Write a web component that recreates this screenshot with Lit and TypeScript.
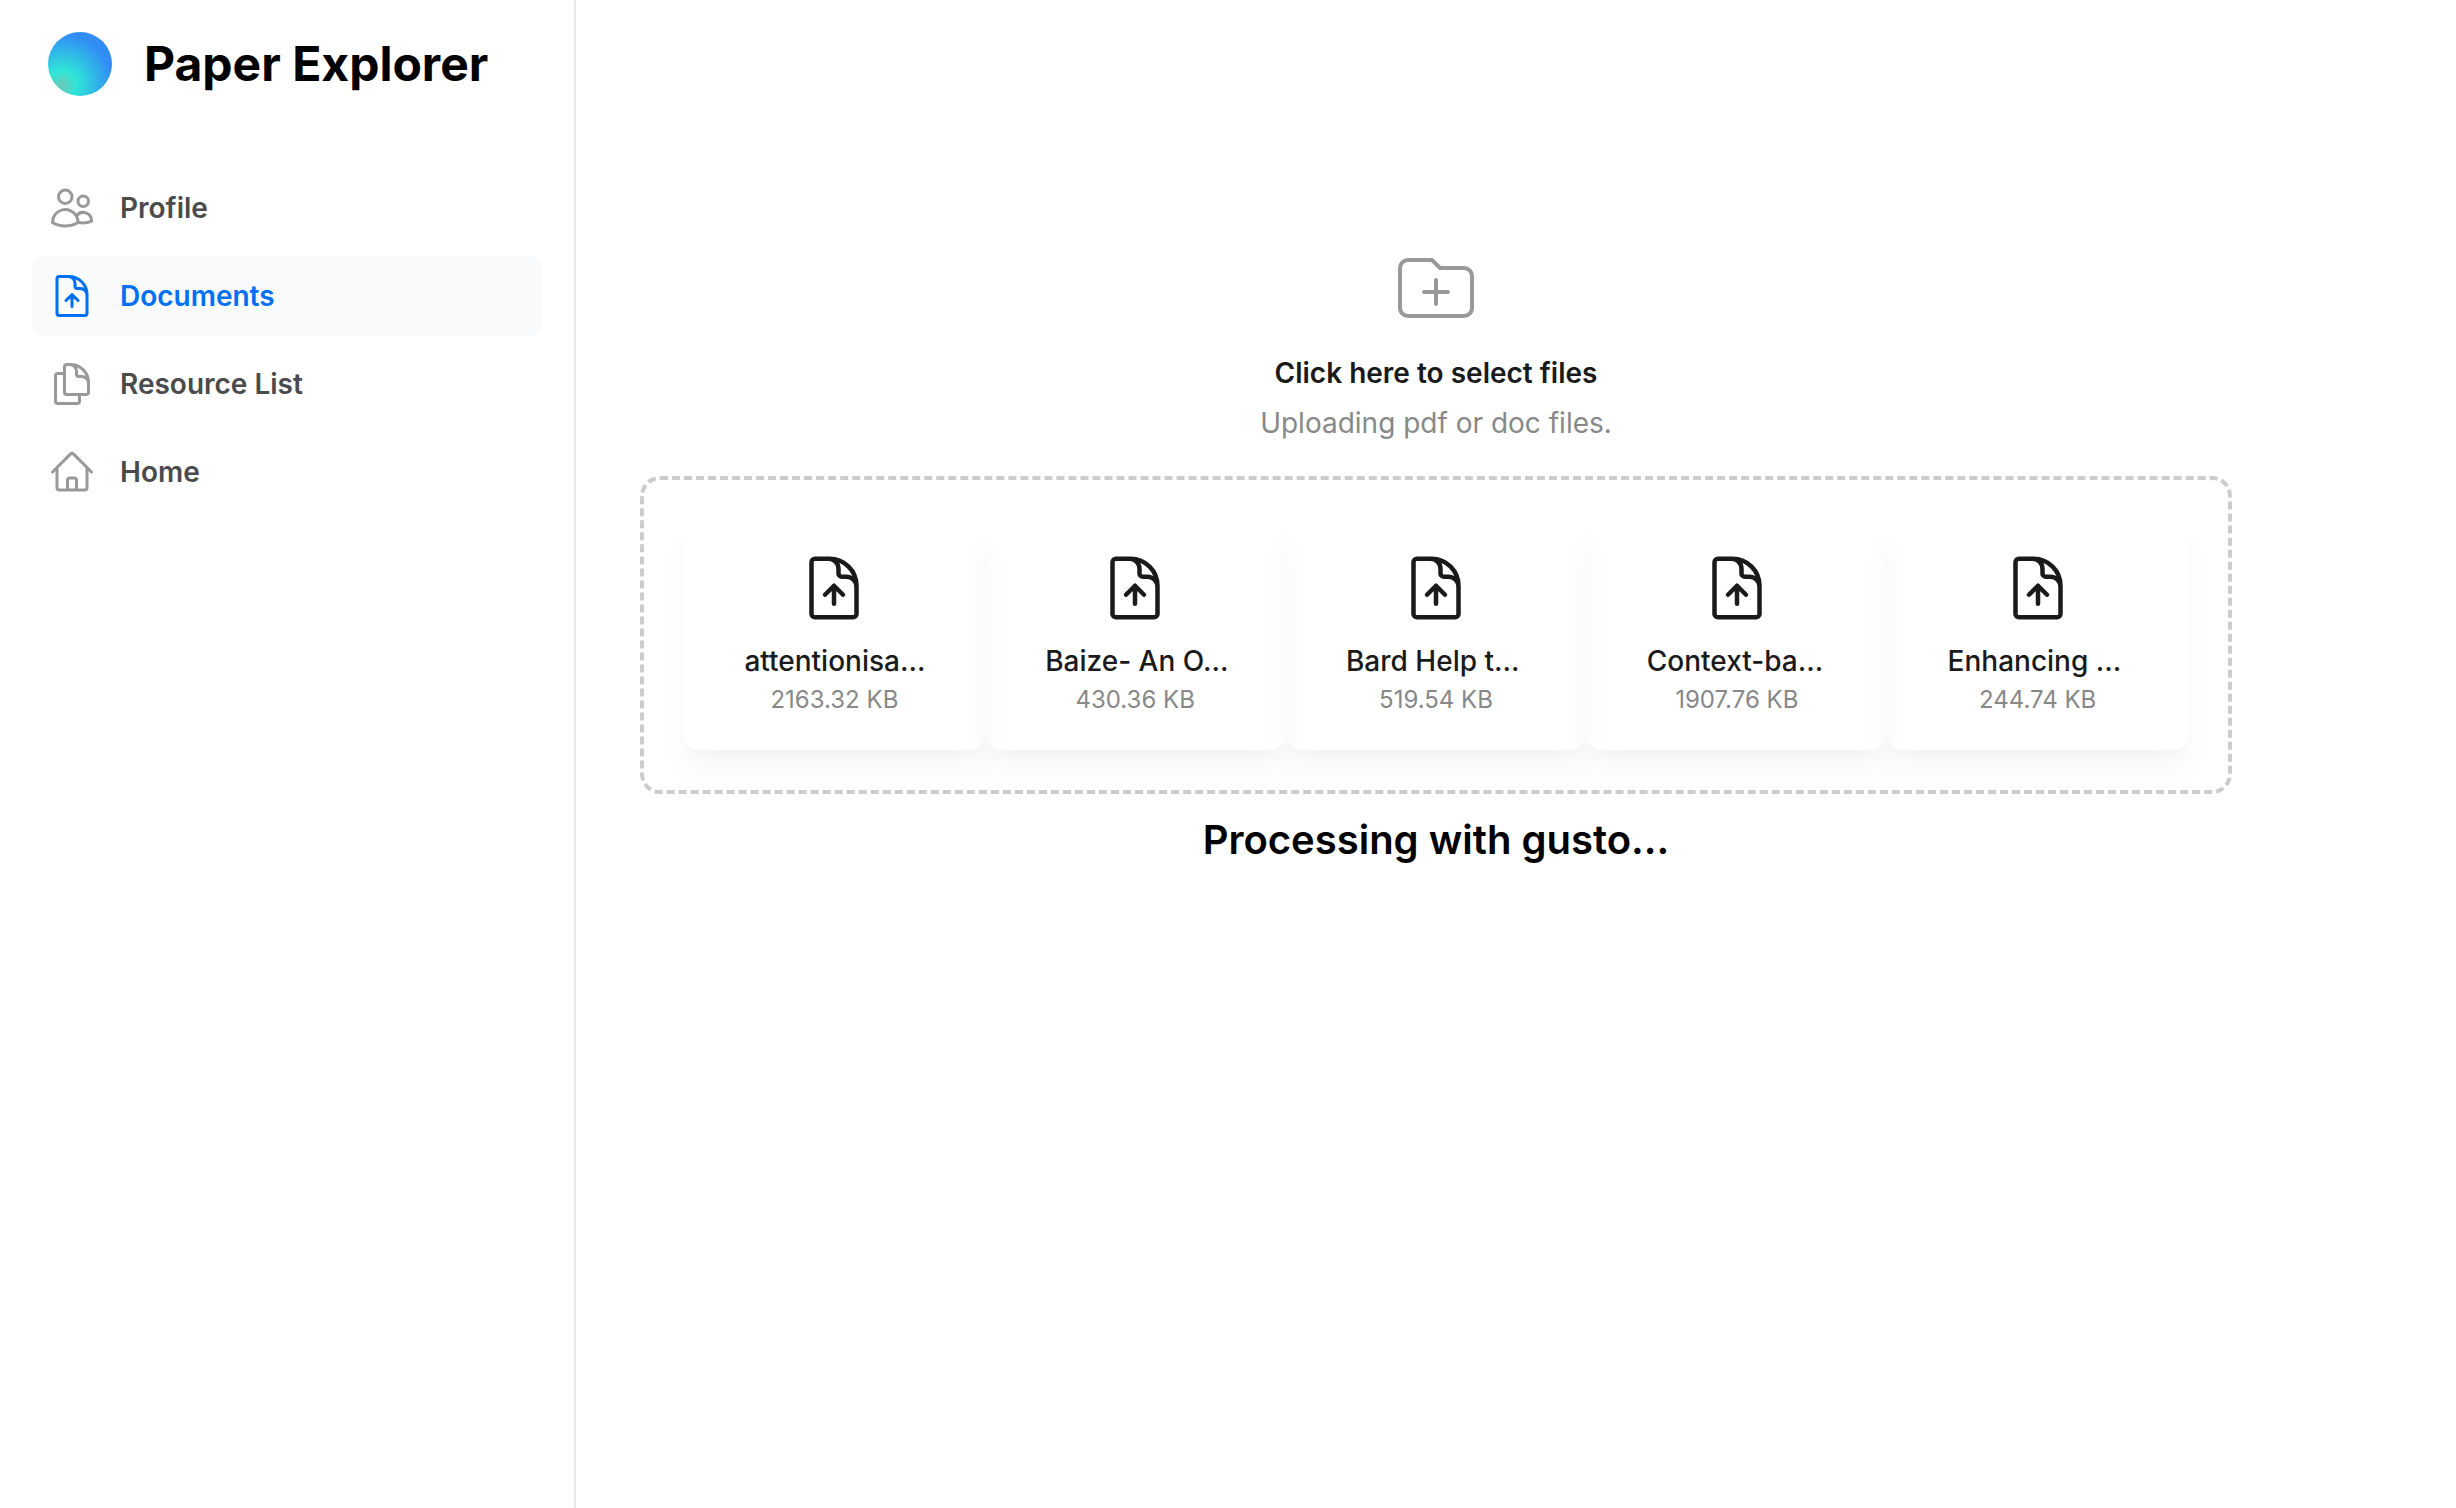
import { LitElement, css, html, svg } from "lit";
import { customElement, property } from "lit/decorators.js";

const icons: Record<string, string> = {
  users:
    "M15 19.128a9.38 9.38 0 002.625.372 9.337 9.337 0 004.121-.952 4.125 4.125 0 00-7.533-2.493M15 19.128v-.003c0-1.113-.285-2.16-.786-3.07M15 19.128v.106A12.318 12.318 0 018.624 21c-2.331 0-4.512-.645-6.374-1.766l-.001-.109a6.375 6.375 0 0111.964-3.07M12 6.375a3.375 3.375 0 11-6.75 0 3.375 3.375 0 016.75 0zm8.25 2.25a2.625 2.625 0 11-5.25 0 2.625 2.625 0 015.25 0z",
  documentUp:
    "M19.5 14.25v-2.625a3.375 3.375 0 00-3.375-3.375h-1.5A1.125 1.125 0 0113.5 7.125v-1.5a3.375 3.375 0 00-3.375-3.375H8.25m6.75 12l-3-3m0 0l-3 3m3-3v6m-1.5-15H5.625c-.621 0-1.125.504-1.125 1.125v17.25c0 .621.504 1.125 1.125 1.125h12.75c.621 0 1.125-.504 1.125-1.125V11.25a9 9 0 00-9-9z",
  documents:
    "M15.75 17.25v3.375c0 .621-.504 1.125-1.125 1.125h-9.75a1.125 1.125 0 01-1.125-1.125V7.875c0-.621.504-1.125 1.125-1.125H6.75a9.06 9.06 0 011.5.124m7.5 10.376h3.375c.621 0 1.125-.504 1.125-1.125V11.25c0-4.46-3.243-8.161-7.5-8.876a9.06 9.06 0 00-1.5-.124H9.375c-.621 0-1.125.504-1.125 1.125v3.5m7.5 10.375H9.375a1.125 1.125 0 01-1.125-1.125v-9.25m12 6.625v-1.875a3.375 3.375 0 00-3.375-3.375h-1.5a1.125 1.125 0 01-1.125-1.125v-1.5a3.375 3.375 0 00-3.375-3.375H9.75",
  home:
    "M2.25 12l8.954-8.955c.44-.439 1.152-.439 1.591 0L21.75 12M4.5 9.75v10.125c0 .621.504 1.125 1.125 1.125H9.75v-4.875c0-.621.504-1.125 1.125-1.125h2.25c.621 0 1.125.504 1.125 1.125V21h4.125c.621 0 1.125-.504 1.125-1.125V9.75M8.25 21h8.25",
  folderPlus:
    "M9 13h6m-3-3v6m-9 1V7a2 2 0 012-2h6l2 2h6a2 2 0 012 2v8a2 2 0 01-2 2H5a2 2 0 01-2-2z",
};

@customElement("line-icon")
export class LineIcon extends LitElement {
  @property() name = "home";
  @property({ type: Number }) weight = 1.5;

  static styles = css`
    :host {
      display: block;
      flex: none;
    }
    .icon {
      display: block;
      width: 100%;
      height: 100%;
      fill: none;
      stroke: currentColor;
      stroke-linecap: round;
      stroke-linejoin: round;
    }
  `;

  render() {
    return html`<svg class="icon" viewBox="0 0 24 24" stroke-width=${this.weight} aria-hidden="true">
      ${svg`<path d=${icons[this.name]}></path>`}
    </svg>`;
  }
}

@customElement("side-nav")
export class SideNav extends LitElement {
  private items = [
    { label: "Profile", icon: "users" },
    { label: "Documents", icon: "documentUp", active: true },
    { label: "Resource List", icon: "documents" },
    { label: "Home", icon: "home" },
  ];

  static styles = css`
    :host {
      display: block;
      box-sizing: border-box;
      padding: 32px;
      border-right: 2px solid #e8e8e8;
    }
    .brand {
      display: flex;
      align-items: center;
      gap: 32px;
      padding: 0 16px;
    }
    .logo {
      width: 64px;
      height: 64px;
      border-radius: 50%;
      background: radial-gradient(circle at 22% 83%, #6cc8b8 0, #2fe6d8 20%, #318cf5 70%);
    }
    .title {
      margin: 0;
      color: #000;
      font-size: 48px;
      line-height: 64px;
      font-weight: 700;
      white-space: nowrap;
    }
    .list {
      display: grid;
      gap: 8px;
      margin: 72px 0 0;
      padding: 0;
      list-style: none;
    }
    .link {
      display: flex;
      align-items: center;
      gap: 24px;
      padding: 16px;
      border-radius: 12px;
      color: #4b4b4b;
      font-size: 28px;
      line-height: 48px;
      font-weight: 600;
      text-decoration: none;
    }
    .mark {
      width: 48px;
      height: 48px;
      color: #999;
    }
    .active,
    .active .mark {
      color: #0070f3;
    }
    .active {
      background: #f8fafc;
    }
  `;

  render() {
    return html`
      <header class="brand">
        <span class="logo"></span>
        <h1 class="title">Paper Explorer</h1>
      </header>
      <nav>
        <ul class="list">
          ${this.items.map(
            (item) => html`<li>
              <a class="link ${item.active ? "active" : ""}" href="#">
                <line-icon class="mark" name=${item.icon}></line-icon>
                <span>${item.label}</span>
              </a>
            </li>`
          )}
        </ul>
      </nav>
    `;
  }
}

@customElement("file-card")
export class FileCard extends LitElement {
  @property() name = "";
  @property() size = "";

  static styles = css`
    :host {
      display: flex;
      flex-direction: column;
      align-items: center;
      padding: 32px 16px;
      border-radius: 16px;
      box-shadow:
        0 20px 32px rgba(0, 0, 0, 0.03),
        0 12px 16px -8px rgba(0, 0, 0, 0.03);
    }
    .mark {
      width: 72px;
      height: 72px;
      color: #1a1a1a;
    }
    .name {
      width: 180px;
      margin: 16px 0 0;
      color: #1a1a1a;
      font-size: 28px;
      line-height: 42px;
      font-weight: 500;
      text-align: left;
      white-space: nowrap;
    }
    .size {
      margin: 0;
      color: #888;
      font-size: 24px;
      line-height: 36px;
    }
  `;

  render() {
    return html`
      <line-icon class="mark" name="documentUp"></line-icon>
      <p class="name">${this.name}</p>
      <p class="size">${this.size}</p>
    `;
  }
}

@customElement("app-root")
export class AppRoot extends LitElement {
  private files = [
    { name: "attentionisa…", size: "2163.32 KB" },
    { name: "Baize- An O…", size: "430.36 KB" },
    { name: "Bard Help t…", size: "519.54 KB" },
    { name: "Context-ba…", size: "1907.76 KB" },
    { name: "Enhancing …", size: "244.74 KB" },
  ];

  static styles = css`
    :host {
      display: grid;
      grid-template-columns: 576px minmax(0, 1fr);
      min-height: 100vh;
      background: #fff;
      font-family: Inter, "Liberation Sans", sans-serif;
    }
    .main {
      padding: 240px 224px 64px 64px;
      text-align: center;
    }
    .picker {
      display: grid;
      justify-items: center;
      cursor: pointer;
    }
    .input {
      position: absolute;
      width: 1px;
      height: 1px;
      opacity: 0;
    }
    .folder {
      width: 96px;
      height: 96px;
      color: #999;
    }
    .prompt {
      margin-top: 16px;
      color: #1a1a1a;
      font-size: 28px;
      line-height: 42px;
      font-weight: 600;
    }
    .hint {
      margin-top: 8px;
      color: #888;
      font-size: 28px;
      line-height: 42px;
    }
    .files {
      display: grid;
      grid-template-columns: repeat(5, minmax(0, 1fr));
      margin-top: 32px;
      padding: 40px;
      border: 4px dashed #ccc;
      border-radius: 20px;
    }
    .status {
      margin: 16px 0 0;
      color: #000;
      font-size: 40px;
      line-height: 60px;
      font-weight: 600;
    }
  `;

  render() {
    return html`
      <side-nav></side-nav>
      <main class="main">
        <label class="picker">
          <input class="input" type="file" multiple accept=".pdf,.doc,.docx" />
          <line-icon class="folder" name="folderPlus" weight="1"></line-icon>
          <span class="prompt">Click here to select files</span>
          <span class="hint">Uploading pdf or doc files.</span>
        </label>
        <section class="files">
          ${this.files.map(
            (file) => html`<file-card name=${file.name} size=${file.size}></file-card>`
          )}
        </section>
        <h2 class="status">Processing with gusto...</h2>
      </main>
    `;
  }
}
